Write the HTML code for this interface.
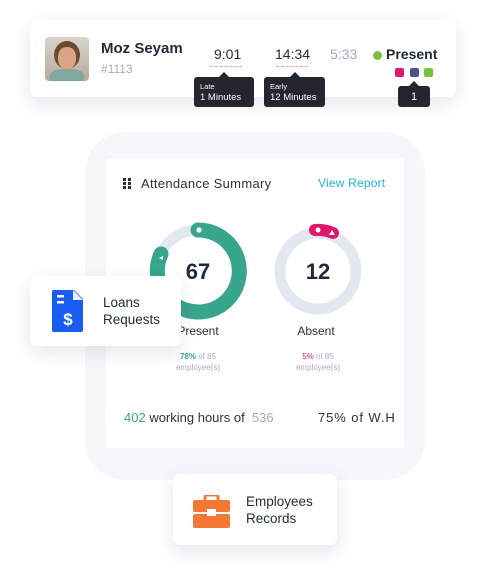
<!DOCTYPE html><html><head><style>
*{margin:0;padding:0;box-sizing:border-box}
body{width:486px;height:586px;background:#fff;font-family:"Liberation Sans",sans-serif;position:relative;overflow:hidden;color:#222a3a}
.a{position:absolute}
.card{position:absolute;background:#fff;border-radius:7px;box-shadow:0 6px 18px rgba(40,50,80,.12)}
.tip{position:absolute;background:#23252f;color:#fff;border-radius:3px;font-size:9.5px;line-height:11px;padding:4px 6px}
.tip:before{content:"";position:absolute;top:-5px;left:50%;margin-left:-5px;border:5px solid transparent;border-top:0;border-bottom-color:#23252f}
.dash{position:absolute;height:0;border-top:1.5px dashed #f19aa8}
</style></head><body>
<div class="card" style="left:30px;top:20px;width:426px;height:77px"></div>
<div class="a" style="left:45px;top:37px;width:44px;height:44px;border-radius:4px;background:linear-gradient(#d8d4cc,#b7a99a);overflow:hidden">
<div class="a" style="left:9px;top:4px;width:26px;height:28px;border-radius:50%;background:#6b4a33"></div>
<div class="a" style="left:13px;top:10px;width:18px;height:22px;border-radius:45%;background:#d9a583"></div>
<div class="a" style="left:5px;top:32px;width:34px;height:16px;border-radius:40% 40% 0 0;background:#7fa9a0"></div></div>
<div class="a" style="left:101px;top:40px;font-size:15px;font-weight:bold;color:#1f2a3b">Moz Seyam</div>
<div class="a" style="left:101px;top:62px;font-size:12px;color:#a8a9c4">#1113</div>
<div class="a" style="left:214px;top:46px;font-size:14px">9:01</div>
<div class="dash" style="left:210px;top:66px;width:32px"></div>
<div class="a" style="left:275px;top:46px;font-size:14px">14:34</div>
<div class="dash" style="left:276px;top:66px;width:32px"></div>
<div class="a" style="left:330px;top:46px;font-size:14px;color:#a3a4c4">5:33</div>
<div class="a" style="left:373px;top:51px;width:9px;height:9px;border-radius:50%;background:#7ac143"></div>
<div class="a" style="left:386px;top:46px;font-size:14px;font-weight:bold">Present</div>
<div class="a" style="left:395px;top:68px;width:9px;height:9px;border-radius:2px;background:#e0176d"></div>
<div class="a" style="left:410px;top:68px;width:9px;height:9px;border-radius:2px;background:#4d5387"></div>
<div class="a" style="left:424px;top:68px;width:9px;height:9px;border-radius:2px;background:#7ac143"></div>
<div class="tip" style="left:194px;top:77px;width:60px"><span style="font-size:7.5px">Late</span><br>1 Minutes</div>
<div class="tip" style="left:264px;top:77px;width:61px"><span style="font-size:7.5px">Early</span><br>12 Minutes</div>
<div class="tip" style="left:398px;top:86px;width:32px;height:21px;text-align:center;font-size:11px;line-height:14px">1</div>

<div class="a" style="left:85px;top:132px;width:340px;height:348px;border-radius:40px;background:#f5f7fb"></div>
<div class="a" style="left:106px;top:158px;width:298px;height:290px;background:#fff;border-radius:3px"></div>
<svg class="a" style="left:123px;top:178px" width="10" height="11"><g fill="#2a3040"><rect x="0" y="0" width="3" height="3"/><rect x="5" y="0" width="3" height="3"/><rect x="0" y="4" width="3" height="3"/><rect x="5" y="4" width="3" height="3"/><rect x="0" y="8" width="3" height="3"/><rect x="5" y="8" width="3" height="3"/></g></svg>
<div class="a" style="left:141px;top:176px;font-size:13px;letter-spacing:.3px;color:#2a3040">Attendance Summary</div>
<div class="a" style="left:318px;top:176px;font-size:12px;letter-spacing:.2px;color:#1ab3e6">View Report</div>
<svg class="a" style="left:140px;top:215px" width="240" height="120">
<circle cx="58" cy="56" r="41" fill="none" stroke="#e3e8f0" stroke-width="11"/>
<path d="M58 15 A41 41 0 1 1 21 39" fill="none" stroke="#38a58d" stroke-width="15" stroke-linecap="round"/>
<circle cx="59" cy="15" r="2.6" fill="#fff"/>
<path d="M23 41 l-4 2 l4 2z" fill="#fff"/>
<circle cx="178" cy="56" r="38" fill="none" stroke="#e3e8f0" stroke-width="11"/>
<path d="M175 15 A41 41 0 0 1 193 18" fill="none" stroke="#e0176d" stroke-width="12" stroke-linecap="round"/>
<circle cx="178" cy="15" r="2.5" fill="#fff"/>
<path d="M189 20 l3 -5 l3 5z" fill="#fff"/>
<text x="58" y="64" text-anchor="middle" font-size="22" font-weight="bold" fill="#1f2a3b" font-family="Liberation Sans">67</text>
<text x="178" y="64" text-anchor="middle" font-size="22" font-weight="bold" fill="#1f2a3b" font-family="Liberation Sans">12</text>
</svg>
<div class="a" style="left:168px;top:324px;font-size:12px;color:#2a3040;width:60px;text-align:center">Present</div>
<div class="a" style="left:286px;top:324px;font-size:12px;color:#2a3040;width:60px;text-align:center">Absent</div>
<div class="a" style="left:158px;top:351px;width:80px;text-align:center;font-size:8px;line-height:11px;color:#a8a9c4"><b style="color:#38a58d">78%</b> of 85<br>employee(s)</div>
<div class="a" style="left:278px;top:351px;width:80px;text-align:center;font-size:8px;line-height:11px;color:#a8a9c4"><b style="color:#e0176d;font-weight:normal">5%</b> of 85<br>employee(s)</div>
<div class="a" style="left:124px;top:410px;font-size:13px;color:#2a3040"><span style="color:#38a58d">402</span> working hours of &nbsp;<span style="color:#a8a9c4">536</span></div>
<div class="a" style="left:318px;top:410px;font-size:13px;letter-spacing:.9px;color:#2a3040">75% of W.H</div>

<div class="card" style="left:30px;top:276px;width:151px;height:70px"></div>
<svg class="a" style="left:52px;top:290px" width="32" height="42"><path d="M2 0 H22 L31 9 V40 a2 2 0 0 1 -2 2 H2 a2 2 0 0 1 -2 -2 V2 a2 2 0 0 1 2 -2z" fill="#1a5cf0"/><path d="M21 0 V10 H31" fill="#fff" opacity=".9"/><rect x="5" y="5" width="7" height="2.5" fill="#fff"/><rect x="5" y="11" width="7" height="2.5" fill="#fff"/><text x="16" y="35" text-anchor="middle" font-size="17" font-weight="bold" fill="#fff" font-family="Liberation Sans">$</text></svg>
<div class="a" style="left:103px;top:294px;font-size:13.5px;line-height:17px;color:#1f2a3b">Loans<br>Requests</div>

<div class="card" style="left:173px;top:474px;width:164px;height:71px"></div>
<svg class="a" style="left:193px;top:495px" width="37" height="33"><path d="M12 5 V2 a2 2 0 0 1 2 -2 H23 a2 2 0 0 1 2 2 V5" fill="none" stroke="#f47835" stroke-width="3"/><rect x="0" y="5" width="37" height="12" rx="2" fill="#f47835"/><rect x="0" y="19" width="37" height="14" rx="2" fill="#f47835"/><rect x="14" y="14" width="9" height="7" fill="#fff"/></svg>
<div class="a" style="left:246px;top:493px;font-size:13.5px;line-height:17px;color:#1f2a3b">Employees<br>Records</div>
</body></html>
